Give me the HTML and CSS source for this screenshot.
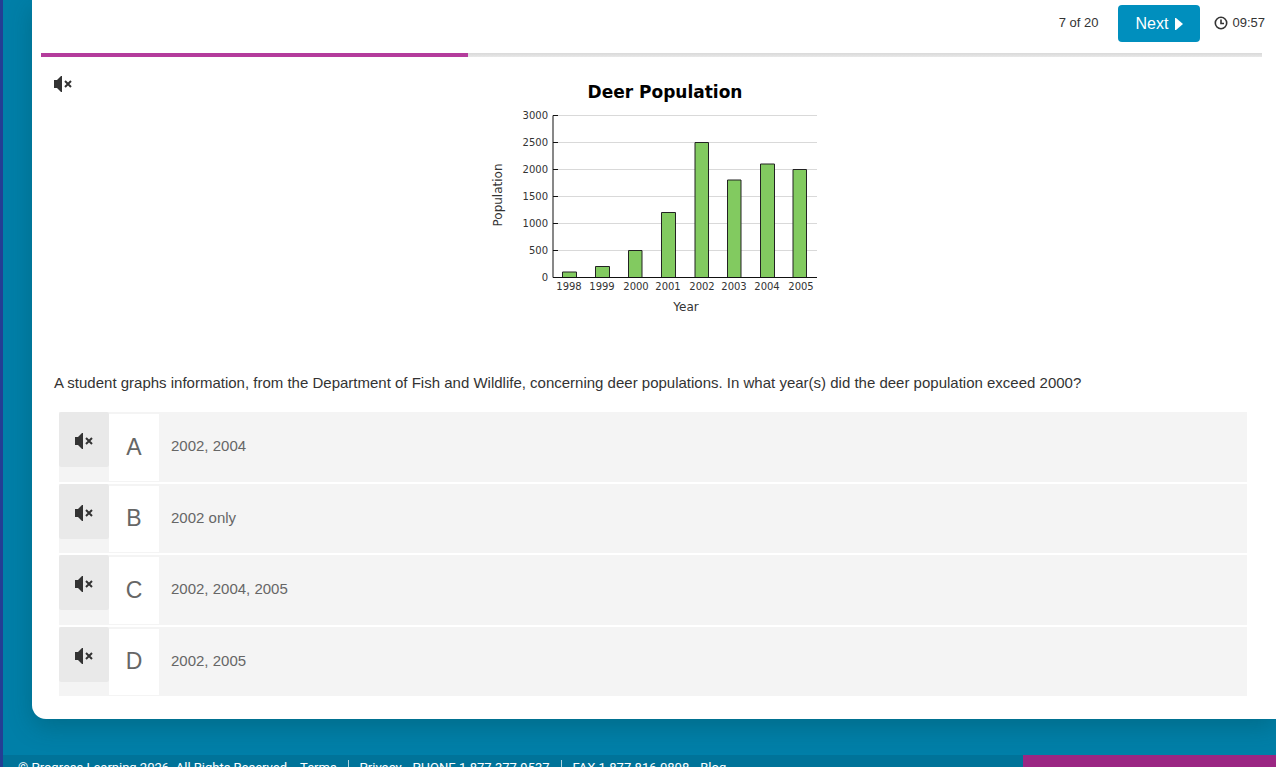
FILE: index.html
```html
<!DOCTYPE html>
<html lang="en">
<head>
<meta charset="utf-8">
<title>Progress Learning</title>
<link rel="stylesheet" href="styles.css">
</head>
<body>
<svg class="sprites" aria-hidden="true">
  <symbol id="muted" viewBox="0 0 18 16">
    <path d="M0 4h3l4-4h1v16H7l-4-4H0z"/>
    <path class="cross" d="M11 5l6 6M17 5l-6 6"/>
  </symbol>
</svg>
<main class="card">
  <header class="topbar">
    <span class="count">7 of 20</span>
    <button class="next" type="button">Next
      <svg class="arrow" viewBox="0 0 8 12" aria-hidden="true"><path d="M0 0h1l7 6-7 6H0z"/></svg>
    </button>
    <span class="timer">
      <svg class="clock" viewBox="0 0 14 14" aria-hidden="true"><circle cx="7" cy="7" r="5.700"/><path d="M7 3.500V7.500H10"/></svg>
      <span>09:57</span>
    </span>
  </header>
  <div class="progress"><div class="progress-fill" style="width:35%"></div></div>
  <section class="question">
    <button class="speak" type="button" aria-label="Read question aloud"><svg class="speaker"><use href="#muted"/></svg></button>
    <svg class="chart" viewBox="0 0 350 240" role="img" aria-label="Deer Population by year">
      <text class="chart-title" x="185" y="22">Deer Population</text>
      <path class="grid" d="M78 39.500H337M78 66.500H337M78 93.500H337M78 120.500H337M78 147.500H337M78 174.500H337"/>
      <g class="bars">
        <path d="M82.500 201.500v-5.500h14v5.500M115.500 201.500v-11h14v11M148.500 201.500v-27h13.500v27M181.500 201.500v-65h14v65M215 201.500v-135h13.500v135M247.500 201.500v-97.500h13.500v97.500M280.500 201.500v-113.500h14v113.500M313 201.500v-108h13.500v108"/>
      </g>
      <path class="axis" d="M78 39.500H73V201.500H337M73 66.500h5M73 93.500h5M73 120.500h5M73 147.500h5M73 174.500h5"/>
      <g class="y-labels">
        <text x="68" y="43">3000</text>
        <text x="68" y="70">2500</text>
        <text x="68" y="97">2000</text>
        <text x="68" y="124">1500</text>
        <text x="68" y="151">1000</text>
        <text x="68" y="178">500</text>
        <text x="68" y="205">0</text>
      </g>
      <g class="x-labels">
        <text x="89" y="214">1998</text>
        <text x="122" y="214">1999</text>
        <text x="156" y="214">2000</text>
        <text x="188" y="214">2001</text>
        <text x="222" y="214">2002</text>
        <text x="254" y="214">2003</text>
        <text x="287" y="214">2004</text>
        <text x="321" y="214">2005</text>
      </g>
      <text class="axis-name" x="206" y="235">Year</text>
      <text class="axis-name" transform="translate(22 119) rotate(-90)">Population</text>
    </svg>
  </section>
  <p class="prompt">A student graphs information, from the Department of Fish and Wildlife, concerning deer populations. In what year(s) did the deer population exceed 2000?</p>
  <div class="answers">
    <div class="answer">
      <button class="listen" type="button" aria-label="Read answer A aloud"><svg class="speaker"><use href="#muted"/></svg></button>
      <button class="choice" type="button"><span class="letter">A</span><span class="value">2002, 2004</span></button>
    </div>
    <div class="answer">
      <button class="listen" type="button" aria-label="Read answer B aloud"><svg class="speaker"><use href="#muted"/></svg></button>
      <button class="choice" type="button"><span class="letter">B</span><span class="value">2002 only</span></button>
    </div>
    <div class="answer">
      <button class="listen" type="button" aria-label="Read answer C aloud"><svg class="speaker"><use href="#muted"/></svg></button>
      <button class="choice" type="button"><span class="letter">C</span><span class="value">2002, 2004, 2005</span></button>
    </div>
    <div class="answer">
      <button class="listen" type="button" aria-label="Read answer D aloud"><svg class="speaker"><use href="#muted"/></svg></button>
      <button class="choice" type="button"><span class="letter">D</span><span class="value">2002, 2005</span></button>
    </div>
  </div>
</main>
<footer class="footer">
  <div class="legal">
    <span>© Progress Learning 2026. All Rights Reserved</span>
    <a class="terms" href="#">Terms</a>
    <i class="rule"></i>
    <a href="#">Privacy</a>
    <span>PHONE 1.877.377.9537</span>
    <i class="rule"></i>
    <span>FAX 1.877.816.0808</span>
    <a href="#">Blog</a>
  </div>
  <div class="footer-accent"></div>
</footer>
</body>
</html>
```
FILE: styles.css
```css
* { box-sizing: border-box; }
html { height: 100%; overflow: hidden; }
body {
  height: 100%;
  margin: 0;
  overflow: hidden;
  border-left: 3px solid #233e94;
  background: #007fa8;
  color: #333;
  font-family: "Liberation Sans", Arial, sans-serif;
  font-size: 15px;
}
button {
  margin: 0;
  padding: 0;
  border: 0;
  background: none;
  color: inherit;
  font: inherit;
  cursor: pointer;
}
a { color: inherit; text-decoration: none; }
.sprites { display: none; }

.card {
  margin-left: 29px;
  padding: 5px 0 23px 9px;
  border-bottom-left-radius: 14px;
  background: #fff;
  box-shadow: 0 8px 24px rgba(0, 60, 60, 0.28);
}
.topbar {
  display: flex;
  align-items: center;
  justify-content: flex-end;
  height: 37px;
  padding-right: 11px;
  font-size: 13px;
  line-height: 16px;
}
.count, .timer { padding-bottom: 1px; }
.next {
  display: flex;
  align-items: center;
  justify-content: center;
  gap: 7px;
  width: 82px;
  height: 37px;
  margin: 0 14px 0 20px;
  border-radius: 4px;
  background: #008fbe;
  color: #fff;
  font-size: 16px;
}
.arrow { width: 8px; height: 12px; fill: #fff; }
.timer { display: flex; align-items: center; gap: 4px; }
.clock {
  width: 14px;
  height: 14px;
  fill: none;
  stroke: #333;
  stroke-width: 1.600;
}
.progress {
  height: 4px;
  margin: 11px 14px 0 0;
  background: linear-gradient(#d9d9d9, #e8e8e8);
}
.progress-fill { height: 100%; background: #b43c9c; }

.speaker { display: block; width: 18px; height: 16px; fill: #333; }
.cross { stroke: #333; stroke-width: 2; }
.question {
  display: grid;
  grid-template-columns: 1fr 350px 1fr;
  align-items: start;
  margin-right: 20px;
  padding: 19px 0 0 13px;
}
.speak { width: 18px; }
.chart {
  width: 350px;
  height: 240px;
  font-family: "DejaVu Sans", Verdana, sans-serif;
  text-anchor: middle;
  fill: #333;
}
.chart-title { fill: #000; font-size: 17px; font-weight: bold; }
.grid { fill: none; stroke: #d9d9d9; }
.bars { fill: #82ca60; stroke: #222; }
.axis { fill: none; stroke: #111; }
.x-labels, .y-labels { font-size: 10px; }
.y-labels { text-anchor: end; }
.axis-name { font-size: 12px; }

.prompt { margin: 58px 0 0 13px; line-height: 18px; }
.answers {
  display: grid;
  grid-auto-rows: 1fr;
  gap: 2px;
  min-height: 284px;
  margin: 20px 29px 0 18px;
}
.answer { display: flex; background: #f4f4f4; color: #666; }
.listen {
  display: flex;
  justify-content: center;
  width: 50px;
  height: 55px;
  padding-top: 21px;
  border-radius: 2px;
  background: #e9e9e9;
}
.choice { display: flex; flex: 1; align-items: stretch; text-align: left; }
.letter {
  display: flex;
  align-items: center;
  justify-content: center;
  width: 50px;
  margin: 2px 0 1px;
  background: #fff;
  font-size: 23px;
}
.value { align-self: center; padding: 0 0 2px 12px; }

.footer {
  display: flex;
  height: 60px;
  margin-top: 36px;
  background: #007399;
  color: #fff;
  font-family: Roboto, sans-serif;
  font-size: 13px;
  font-weight: 400;
}
.legal {
  display: flex;
  flex: 1;
  gap: 11px;
  padding: 5px 0 0 15px;
  line-height: 16px;
  white-space: nowrap;
}
.terms { margin-left: 2px; }
.rule { width: 1px; height: 14px; background: #b3d5e0; }
.footer-accent { width: 253px; background: #9b2683; }
```
